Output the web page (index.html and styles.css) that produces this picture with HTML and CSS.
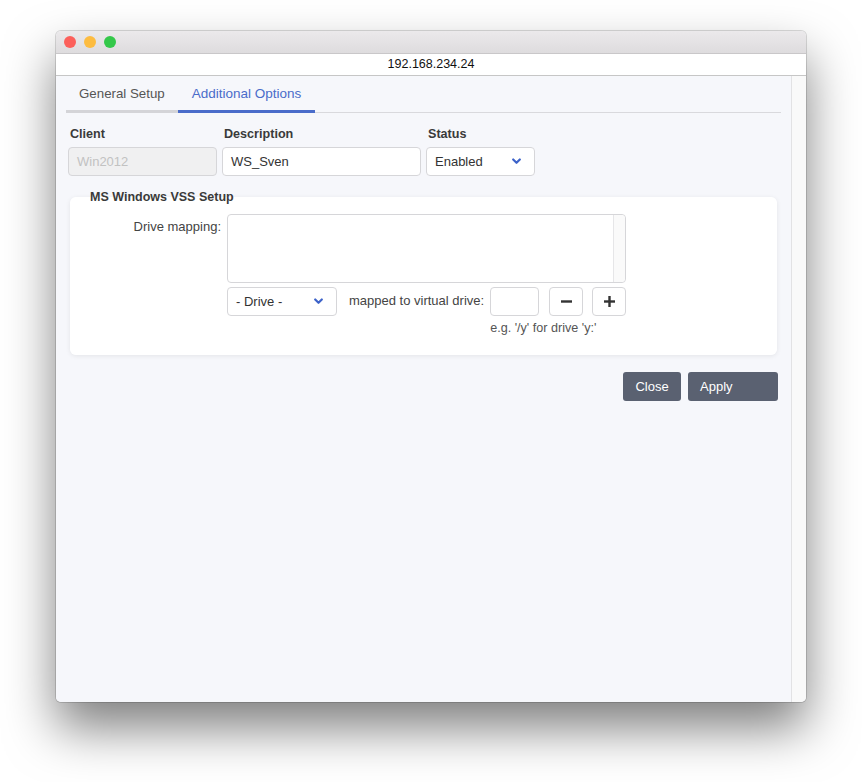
FILE: index.html
```html
<!DOCTYPE html>
<html>
<head>
<meta charset="utf-8">
<link rel="stylesheet" href="styles.css">
</head>
<body>
<div class="window">
  <div class="titlebar">
    <span class="dot red"></span><span class="dot yellow"></span><span class="dot green"></span>
  </div>
  <div class="urlbar">192.168.234.24</div>
  <div class="content">
    <div class="main">
      <div class="tabs">
        <div class="tab">General Setup</div>
        <div class="tab active">Additional Options</div>
      </div>
      <div class="form-row">
        <div class="field f-client">
          <label class="flabel">Client</label>
          <div class="input disabled">Win2012</div>
        </div>
        <div class="field f-desc">
          <label class="flabel">Description</label>
          <div class="input">WS_Sven</div>
        </div>
        <div class="field f-status">
          <label class="flabel">Status</label>
          <div class="input select">Enabled
            <svg class="chev" width="9" height="7" viewBox="0 0 9 7"><path d="M1.2 1.5 L4.5 4.8 L7.8 1.5" fill="none" stroke="#3d63c9" stroke-width="2.2" stroke-linecap="round" stroke-linejoin="round"/></svg>
          </div>
        </div>
      </div>
      <fieldset class="card">
        <legend>MS Windows VSS Setup</legend>
        <div class="map-row">
          <div class="map-label">Drive mapping:</div>
          <div class="map-body">
            <div class="textarea"><div class="ta-scroll"></div></div>
            <div class="ctrl-row">
              <div class="input select drive">- Drive -
                <svg class="chev" width="9" height="7" viewBox="0 0 9 7"><path d="M1.2 1.5 L4.5 4.8 L7.8 1.5" fill="none" stroke="#3d63c9" stroke-width="2.2" stroke-linecap="round" stroke-linejoin="round"/></svg>
              </div>
              <span class="mapped">mapped to virtual drive:</span>
              <div class="vcol">
                <div class="input vdrive"></div>
                <div class="hint">e.g. '/y' for drive 'y:'</div>
              </div>
              <div class="btn-sq minus"><svg width="11" height="3" viewBox="0 0 11 3"><rect width="11" height="2.4" y="0.3" fill="#333"/></svg></div>
              <div class="btn-sq plus"><svg width="11" height="11" viewBox="0 0 11 11"><rect x="0" y="4.3" width="11" height="2.4" fill="#333"/><rect x="4.3" y="0" width="2.4" height="11" fill="#333"/></svg></div>
            </div>
          </div>
        </div>
      </fieldset>
      <div class="actions">
        <div class="btn close">Close</div>
        <div class="btn apply">Apply</div>
      </div>
    </div>
    <div class="sidebar"></div>
  </div>
</div>
</body>
</html>
```
FILE: styles.css
```css
html, body {
  margin: 0;
  background: #ffffff;
}
html {
  min-height: 782px;
}
body {
  box-sizing: border-box;
  min-height: 782px;
  padding: 31px 0 0 56px;
  font-family: "Liberation Sans", Arial, sans-serif;
  color: #333;
}
.window {
  width: 750px;
  height: 671px;
  border-radius: 5px;
  overflow: hidden;
  display: flex;
  flex-direction: column;
  box-shadow: 0 26px 50px rgba(0,0,0,0.5), 0 0 0 1px rgba(0,0,0,0.14);
  background: #f6f7fb;
}
.titlebar {
  height: 22px;
  background: linear-gradient(#ebe9eb, #dedcde);
  border-bottom: 1px solid #c9c7c9;
  display: flex;
  align-items: center;
  padding-left: 8px;
  gap: 8px;
  flex: none;
}
.dot {
  width: 12px;
  height: 12px;
  border-radius: 50%;
  display: block;
}
.red { background: #fc605b; }
.yellow { background: #fdbc40; }
.green { background: #34c84a; }
.urlbar {
  height: 21px;
  line-height: 21px;
  background: #fff;
  border-bottom: 1px solid #c6c6c6;
  text-align: center;
  font-size: 12.5px;
  color: #111;
  flex: none;
}
.content {
  flex: 1;
  display: flex;
}
.main {
  width: 715px;
  padding: 0 10px;
  background: #f6f7fb;
}
.sidebar {
  flex: 1;
  background: #f9f9f9;
  border-left: 1px solid #e2e2e4;
}
.tabs {
  display: flex;
  height: 36px;
  border-bottom: 1px solid #d9d9dd;
}
.tab {
  height: 34px;
  line-height: 35px;
  padding: 0 13px;
  font-size: 13.3px;
  color: #555;
  border-bottom: 3px solid #d4d4d8;
}
.tab.active {
  color: #4a6cca;
  border-bottom-color: #4a6cca;
  font-size: 13.5px;
  padding: 0 14px;
}
.form-row {
  display: flex;
  gap: 5px;
  padding: 13px 0 0 2px;
}
.flabel {
  display: block;
  font-size: 12.6px;
  font-weight: bold;
  color: #3a3a3a;
  line-height: 16px;
  padding-left: 2px;
  margin-bottom: 5px;
}
.input {
  box-sizing: border-box;
  height: 29px;
  line-height: 27px;
  border: 1px solid #d6d6d9;
  border-radius: 4px;
  background: #fff;
  font-size: 13px;
  color: #333;
  padding-left: 8px;
  position: relative;
}
.input.disabled {
  background: #f0f0f1;
  color: #c2c2c2;
}
.f-client { width: 149px; }
.f-desc { width: 199px; }
.f-status { width: 109px; }
.select .chev {
  position: absolute;
  right: 13px;
  top: 10px;
}
.card {
  margin: 14px 4px 0 4px;
  padding: 0 0 20px 0;
  border: none;
  border-radius: 6px;
  background: #fff;
  box-shadow: 0 1px 5px rgba(0,0,0,0.08);
  min-width: 0;
}
.card legend {
  font-size: 12.5px;
  font-weight: bold;
  color: #3a3a3a;
  padding: 0;
  margin-left: 20px;
  line-height: 14px;
}
.map-row {
  display: flex;
  padding-top: 10px;
}
.map-label {
  width: 151px;
  text-align: right;
  font-size: 13px;
  color: #444;
  padding-top: 5px;
  flex: none;
}
.map-body {
  margin-left: 6px;
}
.textarea {
  box-sizing: border-box;
  width: 399px;
  height: 69px;
  border: 1px solid #d6d6d9;
  border-radius: 4px;
  background: #fff;
  display: flex;
  justify-content: flex-end;
}
.ta-scroll {
  width: 11px;
  border-left: 1px solid #e6e6e8;
  background: #fafafa;
  border-radius: 0 4px 4px 0;
}
.ctrl-row {
  display: flex;
  align-items: flex-start;
  margin-top: 4px;
}
.drive {
  width: 110px;
}
.mapped {
  font-size: 13px;
  color: #444;
  line-height: 28px;
  margin-left: 12px;
}
.vcol {
  margin-left: 6px;
  width: 49px;
  position: relative;
}
.vdrive {
  width: 49px;
}
.hint {
  font-size: 12.6px;
  color: #555;
  white-space: nowrap;
  margin-top: 5px;
}
.btn-sq {
  box-sizing: border-box;
  width: 34px;
  height: 29px;
  border: 1px solid #d6d6d9;
  border-radius: 4px;
  background: #fff;
  display: flex;
  align-items: center;
  justify-content: center;
}
.minus { margin-left: 10px; }
.plus { margin-left: 9px; }
.actions {
  display: flex;
  justify-content: flex-end;
  gap: 7px;
  margin: 17px 3px 0 0;
}
.btn {
  box-sizing: border-box;
  height: 29px;
  line-height: 29px;
  border-radius: 3px;
  background: #5a6171;
  color: #fff;
  font-size: 13px;
}
.close {
  width: 58px;
  text-align: center;
}
.apply {
  width: 90px;
  padding-left: 12px;
}
```
